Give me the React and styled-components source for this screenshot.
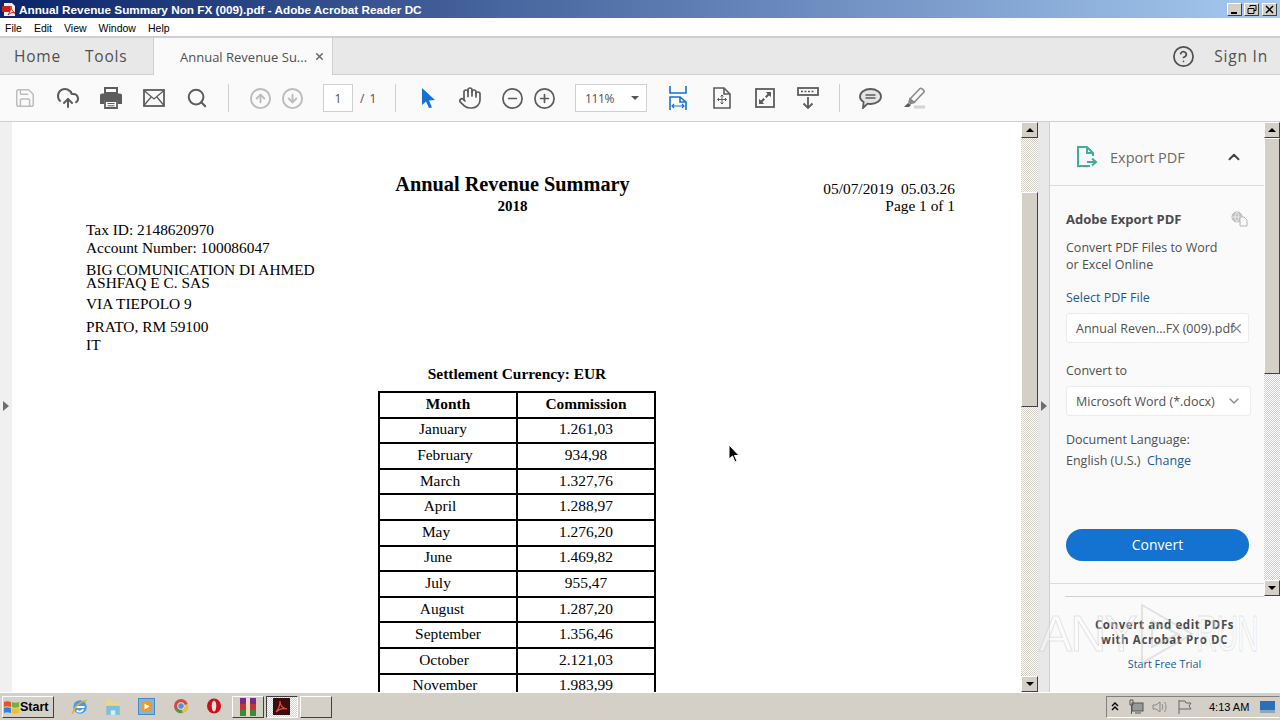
import React from 'react';
import styled, { createGlobalStyle } from 'styled-components';
import {
    Save, CloudUpload, Search, CircleArrowUp, CircleArrowDown, Hand, CircleMinus, CirclePlus,
    CircleHelp, ChevronUp, ChevronDown, X,
} from 'lucide-react';

const GlobalStyle = createGlobalStyle`
    html, body { margin: 0; padding: 0; height: 100%; overflow: hidden; }
    #root { height: 100%; }
    * { box-sizing: border-box; }
`;

const Win = styled.div`
    position: relative;
    width: 1280px;
    height: 720px;
    display: flex;
    flex-direction: column;
    overflow: hidden;
    background: #fafafa;
    font-family: 'Open Sans', sans-serif;
`;

const TitleBar = styled.div`
    height: 18px;
    flex: none;
    display: flex;
    align-items: center;
    padding: 0 2px;
    background: linear-gradient(90deg, #0a246a 0%, #a6caf0 100%);
    color: #fff;
`;

const TitleText = styled.span`
    margin-left: 2px;
    flex: 1;
    font: bold 11.75px 'Liberation Sans', sans-serif;
`;

const WinButton = styled.div`
    width: 15px;
    height: 13px;
    margin-left: ${(p) => p.$gap || 1}px;
    margin-right: ${(p) => p.$right || 0}px;
    display: flex;
    align-items: center;
    justify-content: center;
    background: #d4d0c8;
    border: 1px solid;
    border-color: #fff #404040 #404040 #fff;
`;

const MenuBar = styled.div`
    height: 20px;
    flex: none;
    display: flex;
    align-items: center;
    gap: 12px;
    padding: 1px 0 0 5px;
    background: #fff;
    border-bottom: 2px solid #d0d0d0;
    font: 10.5px 'Liberation Sans', sans-serif;
    color: #000;
`;

const TabRow = styled.div`
    height: 37px;
    flex: none;
    display: flex;
    align-items: stretch;
    background: #e8e8e8;
    border-bottom: 1px solid #cfcfcf;
`;

const NavTab = styled.div`
    width: ${(p) => p.$w}px;
    padding-left: ${(p) => p.$pad}px;
    display: flex;
    align-items: center;
    font-size: 15.5px;
    letter-spacing: 0.8px;
    color: #505050;
`;

const DocTab = styled.div`
    width: 180px;
    margin-bottom: -1px;
    padding: 0 7px 0 26px;
    display: flex;
    align-items: center;
    justify-content: space-between;
    background: #fafafa;
    border-left: 1px solid #cfcfcf;
    border-right: 1px solid #cfcfcf;
    font-size: 13px;
    color: #505050;
`;

const TabRight = styled.div`
    margin-left: auto;
    padding-right: 12px;
    display: flex;
    align-items: center;
    gap: 19px;
    color: #505050;
    font-size: 15.5px;
    letter-spacing: 0.8px;
`;

const Toolbar = styled.div`
    height: 47px;
    flex: none;
    display: flex;
    align-items: center;
    padding-left: 3px;
    background: #fafafa;
    border-bottom: 1px solid #cfcfcf;
`;

const Tool = styled.div`
    width: ${(p) => p.$w || 43}px;
    height: 30px;
    flex: none;
    display: flex;
    align-items: center;
    justify-content: center;
    color: ${(p) => p.$color || '#5c5c5c'};
`;

const Sep = styled.div`
    width: 1px;
    height: 28px;
    flex: none;
    margin: 0 ${(p) => p.$right}px 0 ${(p) => p.$left}px;
    background: #d0d0d0;
`;

const PageInput = styled.div`
    width: 30px;
    height: 28px;
    flex: none;
    margin-left: 15px;
    display: flex;
    align-items: center;
    justify-content: center;
    background: #fff;
    border: 1px solid #d0d0d0;
    font-size: 12px;
    color: #505050;
`;

const PageTotal = styled.span`
    margin-left: 7px;
    width: 18px;
    flex: none;
    font-size: 12px;
    letter-spacing: 1px;
    color: #505050;
    white-space: nowrap;
`;

const ZoomBox = styled.div`
    width: 72px;
    height: 28px;
    flex: none;
    margin: 0 8px 0 15px;
    padding: 0 7px 0 9px;
    display: flex;
    align-items: center;
    justify-content: space-between;
    background: #fff;
    border: 1px solid #d0d0d0;
    font-size: 12px;
    letter-spacing: -0.4px;
    color: #505050;
`;

const Caret = styled.div`
    width: 0;
    height: 0;
    border-left: 4px solid transparent;
    border-right: 4px solid transparent;
    border-top: 4px solid #555;
`;

const Main = styled.div`
    flex: 1;
    min-height: 0;
    display: flex;
`;

const LeftStrip = styled.div`
    width: 12px;
    flex: none;
    display: flex;
    align-items: center;
    background: #f0f0f0;
    padding-left: 3px;
`;

const SideArrow = styled.div`
    width: 0;
    height: 0;
    margin-top: -3px;
    border-top: 5px solid transparent;
    border-bottom: 5px solid transparent;
    border-left: 6px solid #6e6e6e;
`;

const Page = styled.div`
    width: 1009px;
    flex: none;
    padding: 51px 66px 0 74px;
    background: #fff;
    overflow: hidden;
    font-family: 'Liberation Serif', serif;
    color: #000;
    font-size: 15.4px;
`;

const PageHead = styled.div`
    position: relative;
    height: 46px;
    padding-right: 16px;
    text-align: center;
`;

const DocTitle = styled.div`
    font-size: 20.3px;
    font-weight: bold;
    line-height: 22px;
`;

const DocYear = styled.div`
    margin-top: 2px;
    font-size: 15px;
    font-weight: bold;
    line-height: 18px;
`;

const DocStamp = styled.div`
    position: absolute;
    right: 0;
    top: 7px;
    text-align: right;
    line-height: 17px;
    white-space: pre;
`;

const Address = styled.div`
    width: 240px;
`;

const AddrLine = styled.div`
    margin-top: ${(p) => p.$top}px;
    line-height: ${(p) => p.$lh || 18}px;
`;

const TableTitle = styled.div`
    margin-top: 11px;
    width: 862px;
    text-align: center;
    font-weight: bold;
    line-height: 18px;
`;

const RevTable = styled.table`
    margin: 8px 0 0 292px;
    width: 278px;
    border-collapse: collapse;
    table-layout: fixed;
    border: 2px solid #000;
`;

const Cell = styled.td`
    height: 25.6px;
    padding: 0 ${(p) => p.$shift || 0}px 2px 0;
    border: 2px solid #000;
    text-align: center;
    line-height: 16px;
    font-weight: ${(p) => (p.$head ? 'bold' : 'normal')};
`;

const Scroll = styled.div`
    width: ${(p) => p.$w}px;
    flex: none;
    display: flex;
    flex-direction: column;
    background: repeating-conic-gradient(#d4d0c8 0 25%, #fff 0 50%) 0 0 / 2px 2px;
`;

const ScrollBtn = styled.div`
    height: 16px;
    flex: none;
    display: flex;
    align-items: center;
    justify-content: center;
    background: #d4d0c8;
    border: 1px solid;
    border-color: #fff #404040 #404040 #fff;
`;

const ScrollTrack = styled.div`
    flex: 1;
    min-height: 0;
    padding-top: ${(p) => p.$top}px;
`;

const ScrollThumb = styled.div`
    height: ${(p) => p.$h}px;
    background: #d4d0c8;
    border: 1px solid;
    border-color: #fff #404040 #404040 #fff;
`;

const ArrowUp = styled.div`
    width: 0;
    height: 0;
    border-left: 4px solid transparent;
    border-right: 4px solid transparent;
    border-bottom: 4px solid #000;
`;

const ArrowDown = styled.div`
    width: 0;
    height: 0;
    border-left: 4px solid transparent;
    border-right: 4px solid transparent;
    border-top: 4px solid #000;
`;

const Gutter = styled.div`
    width: 12px;
    flex: none;
    display: flex;
    align-items: center;
    padding-left: 3px;
    background: #e8e8e8;
    border-right: 1px solid #cfcfcf;
`;

const RightCol = styled.div`
    width: 230px;
    flex: none;
    display: flex;
    flex-direction: column;
    position: relative;
`;

const PanelTop = styled.div`
    height: 474px;
    flex: none;
    display: flex;
`;

const Panel = styled.div`
    width: 214px;
    flex: none;
    color: #505050;
    font-size: 12.5px;
`;

const PanelHead = styled.div`
    height: 64px;
    padding: 7px 21px 0 26px;
    display: flex;
    align-items: center;
    border-bottom: 1px solid #dcdcdc;
    font-size: 14.5px;
    color: #6a6a6a;
`;

const PanelHeadText = styled.span`
    flex: 1;
    margin-left: 12px;
`;

const PanelBody = styled.div`
    height: 398px;
    padding: 24px 16px 0;
    border-bottom: 1px solid #dcdcdc;
`;

const PanelTitle = styled.div`
    display: flex;
    align-items: center;
    justify-content: space-between;
    font-size: 13px;
    font-weight: bold;
    line-height: 18px;
    color: #4b4b4b;
`;

const PanelText = styled.div`
    margin-top: ${(p) => p.$top || 0}px;
    line-height: ${(p) => p.$lh || 17}px;
    white-space: nowrap;
`;

const PanelLink = styled.span`
    color: #1a5a96;
`;

const Field = styled.div`
    position: relative;
    width: ${(p) => p.$w}px;
    height: ${(p) => p.$h}px;
    margin-top: ${(p) => p.$top}px;
    padding-left: 9px;
    padding-right: 8px;
    display: flex;
    align-items: center;
    justify-content: space-between;
    background: #fff;
    border: 1px solid #ececec;
    border-radius: 3px;
    white-space: nowrap;
`;

const ClearIcon = styled(X)`
    position: absolute;
    right: 4px;
    top: 7px;
`;

const ConvertBtn = styled.div`
    width: 183px;
    height: 32px;
    margin-top: 60px;
    padding-bottom: 2px;
    display: flex;
    align-items: center;
    justify-content: center;
    border-radius: 16px;
    background: #1473d0;
    color: #fff;
    font-size: 14px;
`;

const Promo = styled.div`
    flex: 1;
    margin-left: 15px;
    margin-right: 16px;
    padding-top: 20px;
    border-top: 1px solid #d0d0d0;
    text-align: center;
    font-size: 11.5px;
    font-weight: bold;
    letter-spacing: 0.6px;
    line-height: 15px;
    color: #4b4b4b;
`;

const PromoLink = styled.div`
    margin-top: 9px;
    font-weight: normal;
    font-size: 10.8px;
    letter-spacing: 0;
    color: #1a5a96;
`;

const Watermark = styled.div`
    position: absolute;
    left: -11px;
    bottom: 27px;
    display: flex;
    align-items: center;
    font: 50px 'Liberation Sans', sans-serif;
    letter-spacing: -2px;
    color: rgba(255, 255, 255, 0.35);
    -webkit-text-stroke: 1px rgba(190, 190, 190, 0.38);
    pointer-events: none;
`;

const WatermarkMark = styled.svg`
    margin: 0 0 0 2px;
    flex: none;
`;

const WatermarkTail = styled.span`
    display: inline-block;
    margin-right: -42px;
    transform: scaleX(0.6);
    transform-origin: left center;
`;

const Cursor = styled.svg`
    position: absolute;
    left: 728px;
    top: 444px;
`;

const Taskbar = styled.div`
    height: 28px;
    flex: none;
    display: flex;
    align-items: center;
    padding-left: 2px;
    background: #d4d0c8;
    border-top: 1px solid #fff;
`;

const StartBtn = styled.div`
    width: 52px;
    height: 22px;
    flex: none;
    display: flex;
    align-items: center;
    border: 1px solid;
    border-color: #fff #404040 #404040 #fff;
    font: bold 12.5px 'Liberation Sans', sans-serif;
    color: #000;
`;

const Quick = styled.div`
    width: 33.6px;
    flex: none;
    display: flex;
    justify-content: center;
`;

const QuickRow = styled.div`
    margin-left: 9px;
    display: flex;
`;

const TaskBtn = styled.div`
    width: 32px;
    height: 22px;
    flex: none;
    margin-left: ${(p) => p.$left || 2}px;
    display: flex;
    align-items: center;
    justify-content: center;
    border: 1px solid;
    border-color: ${(p) => (p.$down ? '#404040 #fff #fff #404040' : '#fff #404040 #404040 #fff')};
    background: ${(p) => (p.$down ? 'repeating-conic-gradient(#d4d0c8 0 25%, #fff 0 50%) 0 0 / 2px 2px' : '#d4d0c8')};
`;

const Tray = styled.div`
    margin-left: auto;
    width: 174px;
    height: 22px;
    flex: none;
    display: flex;
    align-items: center;
    padding-left: 3px;
    border: 1px solid;
    border-color: #808080 #d4d0c8 #fff #808080;
    font: 11px 'Liberation Sans', sans-serif;
    color: #000;
`;

const TrayIcon = styled.div`
    width: ${(p) => p.$w}px;
    flex: none;
    display: flex;
    justify-content: center;
`;

const Clock = styled.span`
    margin-left: 7px;
    width: 51px;
    flex: none;
    white-space: nowrap;
`;

const months = [
    ['January', '1.261,03', 10],
    ['February', '934,98', 6],
    ['March', '1.327,76', 16],
    ['April', '1.288,97', 16],
    ['May', '1.276,20', 24],
    ['June', '1.469,82', 20],
    ['July', '955,47', 20],
    ['August', '1.287,20', 12],
    ['September', '1.356,46', 0],
    ['October', '2.121,03', 8],
    ['November', '1.983,99', 6],
];

const PdfIcon = () => (
    <svg width="15" height="15" viewBox="0 0 15 15">
        <path d="M2 1h8l3 3v10H2z" fill="#f4efe8" />
        <path d="M0 4h8v6H0z" fill="#c8201c" />
        <path d="M6 13c2-3 3-6 3-9 0 3 1 5 4 7-3-1-5 0-7 2z" fill="none" stroke="#c8201c" />
    </svg>
);

const PrintIcon = () => (
    <svg width="22" height="22" viewBox="0 0 22 22">
        <path d="M5 1h12v5H5z" fill="none" stroke="#5c5c5c" strokeWidth="2" />
        <path d="M2 6.500h18a2 2 0 0 1 2 2V17h-4v-4H4v4H0V8.500a2 2 0 0 1 2-2z" fill="#5c5c5c" />
        <path d="M5 14h12v7H5z" fill="none" stroke="#5c5c5c" strokeWidth="1.800" />
        <path d="M7.500 16.500h7M7.500 18.800h7" stroke="#5c5c5c" />
    </svg>
);

const MailIcon = () => (
    <svg width="22" height="18" viewBox="0 0 22 18" fill="none" stroke="#5c5c5c">
        <rect x="1" y="1" width="20" height="16" strokeWidth="1.800" />
        <path d="M1 1.500l10 8.500 10-8.500M1 16.500l7.500-9M21 16.500l-7.500-9" strokeWidth="1.300" />
    </svg>
);

const ArrowTool = ({ color }) => (
    <svg width="14" height="20" viewBox="0 0 14 20">
        <path d="M1 0l13 12-6 .5 3 7-3 .5-3-6.500L1 17z" fill={color} />
    </svg>
);

const FitWidth = () => (
    <svg width="18" height="24" viewBox="0 0 18 24" fill="none" stroke="#1473d0" strokeWidth="1.600">
        <path d="M1 0v7h16V0" />
        <path d="M1 24V11h10l6 5v8" />
        <path d="M11 11v5h6" />
        <path d="M3 20h12M5 18l-2 2 2 2M13 18l2 2-2 2" strokeWidth="1.100" />
    </svg>
);

const FitPage = () => (
    <svg width="18" height="22" viewBox="0 0 18 22" fill="none" stroke="#5c5c5c" strokeWidth="1.600">
        <path d="M1 1h10l6 6v14H1z" />
        <path d="M11 1v6h6" />
        <path d="M9 8v9M4.500 12.500h9M7.500 9.500L9 8l1.500 1.500M7.500 15.500L9 17l1.500-1.500M6 11l-1.500 1.500L6 14M12 11l1.500 1.500L12 14" strokeWidth="1" />
    </svg>
);

const FullScreen = () => (
    <svg width="20" height="20" viewBox="0 0 20 20">
        <rect x="1" y="1" width="18" height="18" fill="none" stroke="#5c5c5c" strokeWidth="1.800" />
        <path d="M11 4h5v5l-2-1.500-2.500 2.500-1.500-1.500L12.500 6zM9 16H4v-5l2 1.500 2.500-2.500 1.500 1.500L7.500 14z" fill="#5c5c5c" />
    </svg>
);

const ReadMode = () => (
    <svg width="22" height="22" viewBox="0 0 22 22" fill="none" stroke="#5c5c5c" strokeWidth="1.800">
        <rect x="1" y="1" width="20" height="7" />
        <path d="M4 4.500h14" strokeDasharray="2 1.500" strokeWidth="1.500" />
        <path d="M11 10v11M6.500 16.500L11 21l4.500-4.500" />
    </svg>
);

const CommentIcon = () => (
    <svg width="23" height="21" viewBox="0 0 23 21" fill="none" stroke="#5c5c5c" strokeWidth="1.800">
        <path d="M11.500 1C17.500 1 22 4.300 22 8.500S17.500 16 11.500 16c-1 0-2-.1-3-.3L4 20l.6-6C2.300 12.700 1 10.700 1 8.500 1 4.300 5.500 1 11.500 1z" fill="#e4e4e4" />
        <path d="M6.500 7h10M6.500 10h10" strokeWidth="1.300" />
    </svg>
);

const MarkerIcon = () => (
    <svg width="24" height="22" viewBox="0 0 24 22" fill="none" stroke="#8a8a8a" strokeWidth="1.600">
        <path d="M8 12L18 1.500c1-1 5 2 4 3.500L12 15.500z" />
        <path d="M8 12l-1 3 1.500 1.500 3.500-1z" fill="#8a8a8a" />
        <path d="M6 16l-4 4h5l2-2" fill="#5c5c5c" stroke="none" />
        <path d="M12 20h11" stroke="#d4d4d4" strokeWidth="3" />
    </svg>
);

const ExportIcon = () => (
    <svg width="22" height="24" viewBox="0 0 22 24" fill="none" stroke="#3fae97" strokeWidth="2">
        <path d="M14 21H2V2h9l6 6v3" />
        <path d="M11 2v6h6" />
        <path d="M11 17h8M16 13.500l4 3.500-4 3.500" />
    </svg>
);

const CloudDocIcon = () => (
    <svg width="17" height="16" viewBox="0 0 17 16" fill="none" stroke="#b4b4b4">
        <circle cx="6" cy="6" r="5" fill="#c4c4c4" />
        <path d="M1 6h10M6 1c-2.500 3-2.500 7 0 10M6 1c2.500 3 2.500 7 0 10" stroke="#f4f4f4" strokeWidth="0.800" />
        <path d="M9 6h4l3 3v6H9z" fill="#fafafa" />
    </svg>
);

const FlagLogo = () => (
    <svg width="17" height="16" viewBox="0 0 17 16">
        <path d="M1 3c2-1 4-1 7 0v5C5 7 3 7 1 8z" fill="#e2562a" />
        <path d="M9 3c2 1 4 1 7 0v5c-3 1-5 1-7 0z" fill="#6eb33f" />
        <path d="M1 9c2-1 4-1 7 0v5c-3-1-5-1-7 0z" fill="#3a7fd5" />
        <path d="M9 9c2 1 4 1 7 0v5c-3 1-5 1-7 0z" fill="#f0c020" />
    </svg>
);

const IeIcon = () => (
    <svg width="18" height="18" viewBox="0 0 16 16">
        <circle cx="8" cy="8" r="6" fill="#4a9ade" />
        <path d="M4 8h8M5 11c2 2 5 1 6-1" stroke="#fff" strokeWidth="1.600" fill="none" />
        <path d="M1 14c2-6 7-11 13-12" stroke="#e0b030" strokeWidth="1.300" fill="none" />
    </svg>
);

const FolderIcon = () => (
    <svg width="18" height="18" viewBox="0 0 16 16">
        <path d="M2 2h5l1 2h6v10H2z" fill="#e8d68c" />
        <path d="M2 7h12v8H2z" fill="#7fbfd8" />
        <path d="M6 11h4v4H6z" fill="#d8eef5" />
    </svg>
);

const MediaIcon = () => (
    <svg width="17" height="17" viewBox="0 0 17 17">
        <rect x="0.500" y="0.500" width="16" height="16" fill="#7fb6e0" stroke="#4a88bf" />
        <rect x="3" y="3" width="11" height="11" rx="2" fill="#f09a28" />
        <path d="M6.500 5.500l5 3-5 3z" fill="#fff" />
    </svg>
);

const ChromeIcon = () => (
    <svg width="16" height="16" viewBox="0 0 16 16">
        <circle cx="8" cy="8" r="7" fill="#d8493a" />
        <path d="M8 8L2 11.500A7 7 0 0 0 9.500 15z" fill="#4c9a4c" />
        <path d="M8 8l1.500 7A7 7 0 0 0 14.800 6z" fill="#e8c23c" />
        <circle cx="8" cy="8" r="3.400" fill="#5a8fd8" stroke="#e8e8e8" />
    </svg>
);

const OperaIcon = () => (
    <svg width="16" height="16" viewBox="0 0 16 16">
        <ellipse cx="8" cy="8" rx="7" ry="7.500" fill="#c8101a" />
        <ellipse cx="8" cy="8" rx="2.300" ry="5.500" fill="#f2dcdc" />
    </svg>
);

const RarIcon = () => (
    <svg width="20" height="18" viewBox="0 0 20 18">
        <rect x="2" y="0" width="16" height="6" fill="#7a2a8a" />
        <rect x="2" y="6" width="16" height="6" fill="#c8303a" />
        <rect x="2" y="12" width="16" height="6" fill="#3a8a3a" />
        <rect x="8" y="0" width="4" height="18" fill="#e8e0c0" />
    </svg>
);

const AcroIcon = () => (
    <svg width="17" height="17" viewBox="0 0 17 17">
        <rect width="17" height="17" fill="#3a0c0c" />
        <path d="M3 14c3-3 4-7 4-11 0 4 2 7 7 8-4-1-8 0-11 3z" fill="none" stroke="#ee4a3a" strokeWidth="1.200" />
    </svg>
);

function App() {
    return (
        <Win>
            <GlobalStyle />
            <TitleBar>
                <PdfIcon />
                <TitleText>Annual Revenue Summary Non FX (009).pdf - Adobe Acrobat Reader DC</TitleText>
                <WinButton>
                    <svg width="9" height="9" viewBox="0 0 9 9"><path d="M1 7h6v2H1z" fill="#000" /></svg>
                </WinButton>
                <WinButton $gap={2}>
                    <svg width="10" height="9" viewBox="0 0 10 9" fill="none" stroke="#000"><path d="M3 2V.5h6v5H7M1 3.500h6v5H1z" /></svg>
                </WinButton>
                <WinButton $gap={3} $right={1}>
                    <svg width="9" height="9" viewBox="0 0 9 9" stroke="#000" strokeWidth="1.500"><path d="M1 1l7 7M8 1L1 8" /></svg>
                </WinButton>
            </TitleBar>
            <MenuBar>
                <span>File</span>
                <span>Edit</span>
                <span>View</span>
                <span>Window</span>
                <span>Help</span>
            </MenuBar>
            <TabRow>
                <NavTab $w={71} $pad={14}>Home</NavTab>
                <NavTab $w={82} $pad={14}>Tools</NavTab>
                <DocTab>
                    Annual Revenue Su...
                    <X size={11} strokeWidth={3} color="#666" />
                </DocTab>
                <TabRight>
                    <CircleHelp size={23} strokeWidth={1.8} />
                    <span>Sign In</span>
                </TabRight>
            </TabRow>
            <Toolbar>
                <Tool $color="#bcbcbc"><Save size={22} strokeWidth={1.6} /></Tool>
                <Tool><CloudUpload size={24} strokeWidth={2} /></Tool>
                <Tool><PrintIcon /></Tool>
                <Tool><MailIcon /></Tool>
                <Tool><Search size={22} strokeWidth={2.2} /></Tool>
                <Sep $left={10} $right={15} />
                <Tool $w={32} $color="#bcbcbc"><CircleArrowUp size={23} strokeWidth={2} /></Tool>
                <Tool $w={32} $color="#bcbcbc"><CircleArrowDown size={23} strokeWidth={2} /></Tool>
                <PageInput>1</PageInput>
                <PageTotal>/ 1</PageTotal>
                <Sep $left={16.5} $right={17.5} />
                <Tool $w={30}><ArrowTool color="#1473d0" /></Tool>
                <Tool $w={53}><Hand size={24} strokeWidth={1.7} /></Tool>
                <Tool $w={32}><CircleMinus size={23} strokeWidth={1.8} /></Tool>
                <Tool $w={32}><CirclePlus size={23} strokeWidth={1.8} /></Tool>
                <ZoomBox>
                    111%
                    <Caret />
                </ZoomBox>
                <Tool $w={45}><FitWidth /></Tool>
                <Tool><FitPage /></Tool>
                <Tool><FullScreen /></Tool>
                <Tool><ReadMode /></Tool>
                <Sep $left={9.5} $right={9.5} />
                <Tool><CommentIcon /></Tool>
                <Tool><MarkerIcon /></Tool>
            </Toolbar>
            <Main>
                <LeftStrip><SideArrow /></LeftStrip>
                <Page>
                    <PageHead>
                        <DocTitle>Annual Revenue Summary</DocTitle>
                        <DocYear>2018</DocYear>
                        <DocStamp>{'05/07/2019  05.03.26\nPage 1 of 1'}</DocStamp>
                    </PageHead>
                    <Address>
                        <AddrLine $top={2}>Tax ID: 2148620970</AddrLine>
                        <AddrLine $top={0}>Account Number: 100086047</AddrLine>
                        <AddrLine $top={6} $lh={13}>BIG COMUNICATION DI AHMED ASHFAQ E C. SAS</AddrLine>
                        <AddrLine $top={6}>VIA TIEPOLO 9</AddrLine>
                        <AddrLine $top={5}>PRATO, RM 59100</AddrLine>
                        <AddrLine $top={0}>IT</AddrLine>
                    </Address>
                    <TableTitle>Settlement Currency: EUR</TableTitle>
                    <RevTable>
                        <tbody>
                            <tr>
                                <Cell $head>Month</Cell>
                                <Cell $head>Commission</Cell>
                            </tr>
                            {months.map(([name, value, shift]) => (
                                <tr key={name}>
                                    <Cell $shift={shift}>{name}</Cell>
                                    <Cell>{value}</Cell>
                                </tr>
                            ))}
                        </tbody>
                    </RevTable>
                </Page>
                <Scroll $w={17}>
                    <ScrollBtn><ArrowUp /></ScrollBtn>
                    <ScrollTrack $top={54}><ScrollThumb $h={215} /></ScrollTrack>
                    <ScrollBtn><ArrowDown /></ScrollBtn>
                </Scroll>
                <Gutter><SideArrow /></Gutter>
                <RightCol>
                    <PanelTop>
                        <Panel>
                            <PanelHead>
                                <ExportIcon />
                                <PanelHeadText>Export PDF</PanelHeadText>
                                <ChevronUp size={18} strokeWidth={2.6} color="#444" />
                            </PanelHead>
                            <PanelBody>
                                <PanelTitle>
                                    Adobe Export PDF
                                    <CloudDocIcon />
                                </PanelTitle>
                                <PanelText $top={11}>Convert PDF Files to Word<br />or Excel Online</PanelText>
                                <PanelText $top={16}><PanelLink>Select PDF File</PanelLink></PanelText>
                                <Field $w={183} $h={30} $top={7}>
                                    Annual Reven...FX (009).pdf
                                    <ClearIcon size={15} strokeWidth={2} color="#888" />
                                </Field>
                                <PanelText $top={19}>Convert to</PanelText>
                                <Field $w={185} $h={30} $top={7}>
                                    Microsoft Word (*.docx)
                                    <ChevronDown size={16} strokeWidth={2} color="#888" />
                                </Field>
                                <PanelText $top={15}>Document Language:</PanelText>
                                <PanelText $top={4}>English (U.S.)&nbsp; <PanelLink>Change</PanelLink></PanelText>
                                <ConvertBtn>Convert</ConvertBtn>
                            </PanelBody>
                        </Panel>
                        <Scroll $w={16}>
                            <ScrollBtn><ArrowUp /></ScrollBtn>
                            <ScrollTrack $top={0}><ScrollThumb $h={236} /></ScrollTrack>
                            <ScrollBtn><ArrowDown /></ScrollBtn>
                        </Scroll>
                    </PanelTop>
                    <Promo>
                        Convert and edit PDFs<br />with Acrobat Pro DC
                        <PromoLink>Start Free Trial</PromoLink>
                    </Promo>
                    <Watermark>
                        ANY
                        <WatermarkMark width="58" height="62" viewBox="0 0 58 62" fill="none" stroke="rgba(190,190,190,0.4)" strokeWidth="2">
                            <path d="M4 2l50 29L4 60z" />
                            <path d="M14 18l26 13-26 13z" />
                        </WatermarkMark>
                        <WatermarkTail>RUN</WatermarkTail>
                    </Watermark>
                </RightCol>
            </Main>
            <Taskbar>
                <StartBtn><FlagLogo />Start</StartBtn>
                <QuickRow>
                    <Quick><IeIcon /></Quick>
                    <Quick><FolderIcon /></Quick>
                    <Quick><MediaIcon /></Quick>
                    <Quick><ChromeIcon /></Quick>
                    <Quick><OperaIcon /></Quick>
                </QuickRow>
                <TaskBtn $left={1}><RarIcon /></TaskBtn>
                <TaskBtn $down><AcroIcon /></TaskBtn>
                <TaskBtn />
                <Tray>
                    <TrayIcon $w={10}>
                        <svg width="8" height="9" viewBox="0 0 8 9" fill="none" stroke="#000" strokeWidth="1.400"><path d="M1 4l3-3 3 3M1 8l3-3 3 3" /></svg>
                    </TrayIcon>
                    <TrayIcon $w={32}>
                        <svg width="16" height="16" viewBox="0 0 16 16" fill="none" stroke="#555"><rect x="4" y="4" width="11" height="8" fill="#999" /><path d="M2 1h3v5H2zM3.500 6v9M7 14h6" /></svg>
                    </TrayIcon>
                    <TrayIcon $w={16}>
                        <svg width="16" height="14" viewBox="0 0 16 14" fill="none" stroke="#888"><path d="M1 5h3l4-3v10L4 9H1zM10 4c1 2 1 4 0 6M12.500 2c2 3 2 7 0 10" /></svg>
                    </TrayIcon>
                    <TrayIcon $w={34}>
                        <svg width="16" height="16" viewBox="0 0 16 16" fill="none" stroke="#666"><path d="M2 1v14M2 2h6l1 2h5l-2 3 2 3H2" /></svg>
                    </TrayIcon>
                    <Clock>4:13 AM</Clock>
                    <svg width="15" height="12" viewBox="0 0 15 12"><rect width="15" height="12" fill="#2a6fb8" /><rect y="9" width="15" height="3" fill="#8ab" /></svg>
                </Tray>
            </Taskbar>
            <Cursor width="12" height="19" viewBox="0 0 12 19">
                <path d="M1 1v14l3.500-3 2.500 6 2-1-2.500-5.500H11z" fill="#000" stroke="#fff" strokeWidth="1" />
            </Cursor>
        </Win>
    );
}

export default App;
